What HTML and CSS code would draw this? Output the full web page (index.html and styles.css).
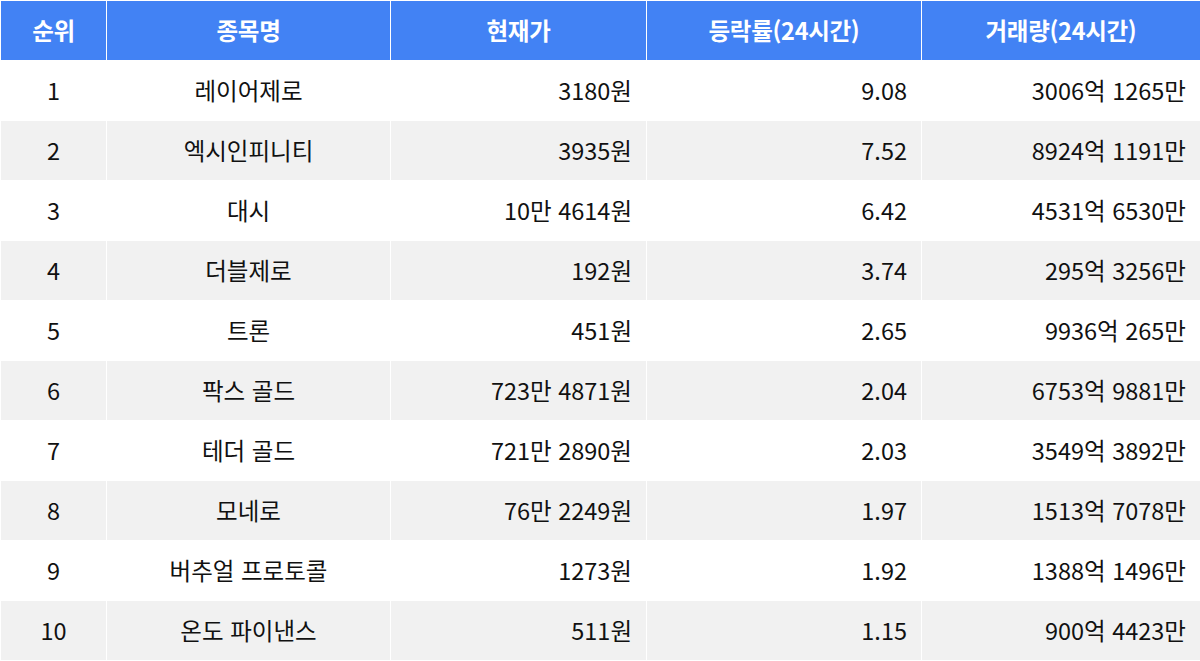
FILE: index.html
```html
<!DOCTYPE html>
<html lang="ko">
<head>
<meta charset="utf-8">
<link rel="stylesheet" href="styles.css">
</head>
<body>
<table class="rank-table">
  <colgroup>
    <col class="c-rank"><col class="c-name"><col class="c-price"><col class="c-change"><col class="c-volume">
  </colgroup>
  <thead>
    <tr><th>순위</th><th>종목명</th><th>현재가</th><th>등락률(24시간)</th><th>거래량(24시간)</th></tr>
  </thead>
  <tbody>
    <tr><td class="center">1</td><td class="center">레이어제로</td><td class="right">3180원</td><td class="right">9.08</td><td class="right">3006억 1265만</td></tr>
    <tr><td class="center">2</td><td class="center">엑시인피니티</td><td class="right">3935원</td><td class="right">7.52</td><td class="right">8924억 1191만</td></tr>
    <tr><td class="center">3</td><td class="center">대시</td><td class="right">10만 4614원</td><td class="right">6.42</td><td class="right">4531억 6530만</td></tr>
    <tr><td class="center">4</td><td class="center">더블제로</td><td class="right">192원</td><td class="right">3.74</td><td class="right">295억 3256만</td></tr>
    <tr><td class="center">5</td><td class="center">트론</td><td class="right">451원</td><td class="right">2.65</td><td class="right">9936억 265만</td></tr>
    <tr><td class="center">6</td><td class="center">팍스 골드</td><td class="right">723만 4871원</td><td class="right">2.04</td><td class="right">6753억 9881만</td></tr>
    <tr><td class="center">7</td><td class="center">테더 골드</td><td class="right">721만 2890원</td><td class="right">2.03</td><td class="right">3549억 3892만</td></tr>
    <tr><td class="center">8</td><td class="center">모네로</td><td class="right">76만 2249원</td><td class="right">1.97</td><td class="right">1513억 7078만</td></tr>
    <tr><td class="center">9</td><td class="center">버추얼 프로토콜</td><td class="right">1273원</td><td class="right">1.92</td><td class="right">1388억 1496만</td></tr>
    <tr><td class="center">10</td><td class="center">온도 파이낸스</td><td class="right">511원</td><td class="right">1.15</td><td class="right">900억 4423만</td></tr>
  </tbody>
</table>
</body>
</html>
```
FILE: styles.css
```css
html, body {
  margin: 0;
  padding: 0;
  background: #ffffff;
}
body {
  font-family: "Noto Sans CJK KR", "Noto Sans", sans-serif;
  color: #111111;
}
.rank-table {
  width: 1200px;
  border-collapse: collapse;
  table-layout: fixed;
}
.c-rank { width: 106px; }
.c-name { width: 284px; }
.c-price { width: 256px; }
.c-change { width: 275px; }
.c-volume { width: 279px; }
.rank-table th,
.rank-table td {
  border: 1px solid #ffffff;
  height: 59px;
  padding: 0 14px;
  font-size: 23.5px;
  line-height: 1;
  white-space: nowrap;
}
.rank-table th {
  background: #4282f4;
  color: #ffffff;
  font-weight: 700;
  text-align: center;
  letter-spacing: -0.3px;
}
.rank-table tbody tr:nth-child(even) td {
  background: #f1f1f1;
}
.center { text-align: center; }
.right { text-align: right; }
```
